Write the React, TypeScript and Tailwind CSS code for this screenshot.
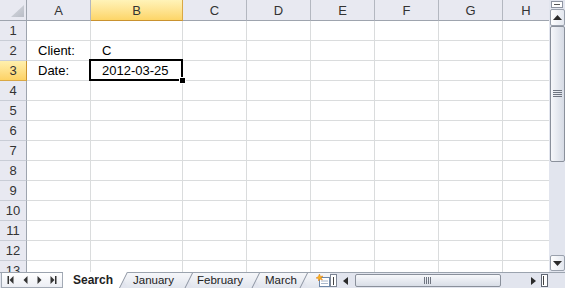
import { Fragment } from 'react';

const LETTERS = ['A', 'B', 'C', 'D', 'E', 'F', 'G', 'H'];
const ROWS = Array.from({ length: 13 }, (_, i) => i + 1);
const DATA: Record<string, string> = {
  A2: 'Client:',
  B2: 'C',
  A3: 'Date:',
  B3: '2012-03-25',
};

function TabEdge() {
  return (
    <svg className="absolute right-0 top-0 h-[16px] w-[9px]" viewBox="0 0 9 16">
      <line x1="0.5" y1="16" x2="8.5" y2="0" stroke="#8b93a1" strokeWidth="1" />
    </svg>
  );
}

function VScrollbar() {
  return (
    <div className="flex h-[272px] w-[16px] flex-col items-center bg-[#e2e5ee]">
      <div className="mt-[1px] flex h-[7px] w-[12px] items-center justify-center border border-[#8e95a2] bg-white">
        <div className="h-[1px] w-[6px] bg-[#555]" />
      </div>
      <div className="mt-[1px] flex h-[17px] w-[15px] items-center justify-center rounded-[2px] border border-[#9aa1ad] bg-linear-to-r from-white to-[#e3e7ef]">
        <svg width="9" height="5" viewBox="0 0 9 5">
          <polygon points="0,5 9,5 4.5,0" fill="#2b2b2b" />
        </svg>
      </div>
      <div className="flex h-[136px] w-[15px] items-center justify-center rounded-[2px] border border-[#8a909b] bg-linear-to-r from-[#f6f7fa] to-[#d6dbe5]">
        <svg width="9" height="8" viewBox="0 0 9 8">
          <rect x="0" y="0" width="9" height="1" fill="#6f7580" />
          <rect x="0" y="2" width="9" height="1" fill="#6f7580" />
          <rect x="0" y="4" width="9" height="1" fill="#6f7580" />
          <rect x="0" y="6" width="9" height="1" fill="#6f7580" />
        </svg>
      </div>
      <div className="flex-1" />
      <div className="mb-[1px] flex h-[16px] w-[15px] items-center justify-center rounded-[2px] border border-[#9aa1ad] bg-linear-to-r from-white to-[#e3e7ef]">
        <svg width="9" height="5" viewBox="0 0 9 5">
          <polygon points="0,0 9,0 4.5,5" fill="#2b2b2b" />
        </svg>
      </div>
    </div>
  );
}

function BottomBar() {
  return (
    <div className="flex h-[16px] w-[565px] border-t border-[#9ba3ae] bg-[#e2e5ee] font-['Liberation_Sans',sans-serif] text-[#222]">
      {/* sheet navigation */}
      <div className="ml-[1px] h-[15px] w-[62px] border-x border-b border-[#a3aab5] bg-linear-to-b from-white to-[#eceef4]">
        <svg width="60" height="14" viewBox="0 0 60 14">
          <rect x="5.5" y="3" width="1.5" height="8" fill="#333" />
          <polygon points="11.5,3 7.5,7 11.5,11" fill="#333" />
          <polygon points="25.5,3 21.5,7 25.5,11" fill="#333" />
          <polygon points="35.5,3 39.5,7 35.5,11" fill="#333" />
          <polygon points="48.5,3 52.5,7 48.5,11" fill="#333" />
          <rect x="53" y="3" width="1.5" height="8" fill="#333" />
        </svg>
      </div>

      {/* tabs */}
      <div className="relative z-40 -mt-[1px] flex h-[16px] w-[65px] items-center pl-[10px]">
        <div className="absolute inset-0 bg-white [clip-path:polygon(0_0,100%_0,calc(100%-8px)_100%,0_100%)]" />
        <span className="relative text-[12px] font-bold leading-none">Search</span>
        <TabEdge />
      </div>
      <div className="relative z-30 -ml-[8px] flex h-[15px] w-[73px] items-center pl-[13px]">
        <div className="absolute inset-0 bg-linear-to-b from-[#f6f7fa] to-[#e1e5ed] [clip-path:polygon(0_0,100%_0,calc(100%-8px)_100%,8px_100%)]" />
        <span className="relative text-[11.5px] leading-none">January</span>
        <TabEdge />
      </div>
      <div className="relative z-20 -ml-[8px] flex h-[15px] w-[75px] items-center pl-[12px]">
        <div className="absolute inset-0 bg-linear-to-b from-[#f6f7fa] to-[#e1e5ed] [clip-path:polygon(0_0,100%_0,calc(100%-8px)_100%,8px_100%)]" />
        <span className="relative text-[11.5px] leading-none">February</span>
        <TabEdge />
      </div>
      <div className="relative z-10 -ml-[8px] flex h-[15px] w-[56px] items-center pl-[13px]">
        <div className="absolute inset-0 bg-linear-to-b from-[#f6f7fa] to-[#e1e5ed] [clip-path:polygon(0_0,100%_0,calc(100%-8px)_100%,8px_100%)]" />
        <span className="relative text-[11.5px] leading-none">March</span>
        <TabEdge />
      </div>
      <div className="relative -ml-[8px] flex h-[15px] w-[30px] items-center pl-[16px]">
        <div className="absolute inset-0 bg-linear-to-b from-[#f6f7fa] to-[#e1e5ed] [clip-path:polygon(0_0,100%_0,100%_100%,8px_100%)]" />
        <svg className="relative" width="14" height="13" viewBox="0 0 14 13">
          <rect x="3.5" y="3.5" width="10" height="9" fill="#fff" stroke="#6d87a8" />
          <line x1="5" y1="7" x2="12" y2="7" stroke="#a9b8cc" />
          <line x1="5" y1="9.5" x2="12" y2="9.5" stroke="#a9b8cc" />
          <polygon
            points="3.5,0 4.4,2.4 7,2.1 5,3.8 6.5,6 4,5 2.5,7 2.5,4.6 0,4 2.2,2.8"
            fill="#f6b21f"
            stroke="#e07b10"
            strokeWidth="0.5"
          />
        </svg>
      </div>

      {/* tab split box */}
      <div className="mt-[1px] flex h-[13px] w-[7px] items-center justify-center border border-[#7d8593] bg-white">
        <div className="h-[8px] w-[1px] bg-[#444]" />
      </div>

      {/* horizontal scrollbar */}
      <div className="flex h-[15px] w-[16px] items-center justify-center">
        <svg width="5" height="8" viewBox="0 0 5 8">
          <polygon points="5,0 0,4 5,8" fill="#2b2b2b" />
        </svg>
      </div>
      <div className="ml-[2px] mt-[1px] flex h-[13px] w-[146px] items-center justify-center rounded-[2px] border border-[#8a909b] bg-linear-to-b from-[#f7f8fb] to-[#d9dee7]">
        <svg width="8" height="7" viewBox="0 0 8 7">
          <rect x="0" y="0" width="1" height="7" fill="#6f7580" />
          <rect x="2" y="0" width="1" height="7" fill="#6f7580" />
          <rect x="4" y="0" width="1" height="7" fill="#6f7580" />
          <rect x="6" y="0" width="1" height="7" fill="#6f7580" />
        </svg>
      </div>
      <div className="flex-1" />
      <div className="flex h-[15px] w-[15px] items-center justify-center">
        <svg width="5" height="8" viewBox="0 0 5 8">
          <polygon points="0,0 5,4 0,8" fill="#2b2b2b" />
        </svg>
      </div>
      <div className="mt-[1px] flex h-[13px] w-[7px] items-center border border-[#5f6672] bg-white pl-[1px]">
        <div className="h-[9px] w-[1px] bg-[#444]" />
      </div>
      <div className="ml-[1px] w-[16px]" />
    </div>
  );
}

export default function App() {
  const colHeaderBase =
    "flex items-center justify-center border-b text-[13px] text-[#333] leading-none";
  return (
    <div className="flex h-[288px] w-[565px] flex-col overflow-hidden bg-white font-['Liberation_Sans',sans-serif]">
      <div className="flex h-[272px] w-[565px]">
        <div className="h-[272px] w-[549px] overflow-hidden">
          <div className="grid grid-cols-[27px_64px_92px_64px_64px_64px_64px_64px_46px] grid-rows-[21px_repeat(13,20px)]">
            {/* corner */}
            <div className="relative border-b border-r border-b-[#9ea4ae] border-r-[#9ea4ae] bg-[#e8e9f1]">
              <svg className="absolute left-0 top-0" width="26" height="20" viewBox="0 0 26 20">
                <defs>
                  <linearGradient id="tri" x1="0" y1="0" x2="1" y2="1">
                    <stop offset="0" stopColor="#d6d9e0" />
                    <stop offset="1" stopColor="#b9bdc6" />
                  </linearGradient>
                </defs>
                <polygon points="11,17 24,17 24,5" fill="url(#tri)" />
              </svg>
            </div>
            {LETTERS.map((l) =>
              l === 'B' ? (
                <div
                  key={l}
                  className={`${colHeaderBase} border-r border-r-[#d9a845] border-b-[#c9922f] bg-linear-to-b from-[#fff3b8] to-[#fdd567]`}
                >
                  {l}
                </div>
              ) : (
                <div
                  key={l}
                  className={`${colHeaderBase} border-b-[#9ea4ae] bg-[#e8e9f1] ${
                    l === 'H' ? '' : 'border-r border-r-[#b3b7c0]'
                  }`}
                >
                  {l}
                </div>
              )
            )}
            {ROWS.map((r) => (
              <Fragment key={r}>
                {r === 3 ? (
                  <div className="flex items-center justify-center border-b border-r border-b-[#d9a845] border-r-[#c9922f] bg-linear-to-b from-[#fff0ad] to-[#fdd264] text-[13px] leading-none text-[#333]">
                    {r}
                  </div>
                ) : (
                  <div className="flex items-center justify-center border-b border-r border-b-[#c9cdd6] border-r-[#9ea4ae] bg-[#e8e9f1] text-[13px] leading-none text-[#333]">
                    {r}
                  </div>
                )}
                {LETTERS.map((l) => {
                  const key = `${l}${r}`;
                  const isSel = key === 'B3';
                  return (
                    <div
                      key={key}
                      className={`relative flex items-center whitespace-nowrap border-b border-[#dadcdd] pl-[11px] text-[13px] leading-none text-black ${
                        l === 'H' ? '' : 'border-r'
                      } ${isSel ? 'z-10' : ''}`}
                    >
                      {DATA[key] ?? ''}
                      {isSel && (
                        <>
                          <div className="pointer-events-none absolute -bottom-[1px] -left-[2px] -right-[1px] -top-[2px] border-2 border-black" />
                          <div className="absolute -bottom-[4px] -right-[4px] h-[7px] w-[7px] border border-white bg-black" />
                        </>
                      )}
                    </div>
                  );
                })}
              </Fragment>
            ))}
          </div>
        </div>
        <VScrollbar />
      </div>
      <BottomBar />
    </div>
  );
}
